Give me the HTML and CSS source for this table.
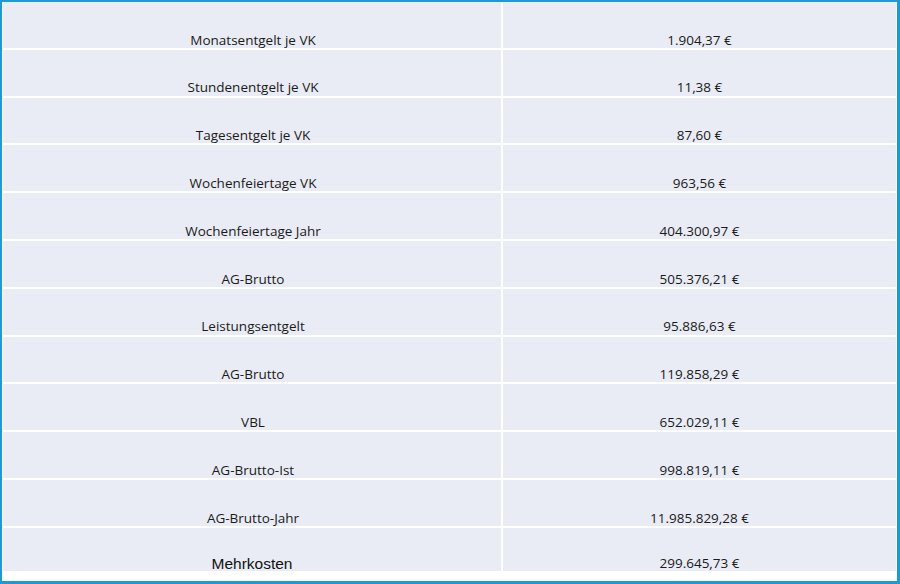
FILE: index.html
```html
<!DOCTYPE html>
<html lang="de">
<head>
<meta charset="utf-8">
<title>Kosten</title>
<link rel="stylesheet" href="styles.css">
</head>
<body>
<div class="frame">
  <div class="table">
    <div class="cell label">Monatsentgelt je VK</div><div class="cell value">1.904,37 €</div>
    <div class="cell label">Stundenentgelt je VK</div><div class="cell value">11,38 €</div>
    <div class="cell label">Tagesentgelt je VK</div><div class="cell value">87,60 €</div>
    <div class="cell label">Wochenfeiertage VK</div><div class="cell value">963,56 €</div>
    <div class="cell label">Wochenfeiertage Jahr</div><div class="cell value">404.300,97 €</div>
    <div class="cell label">AG-Brutto</div><div class="cell value">505.376,21 €</div>
    <div class="cell label">Leistungsentgelt</div><div class="cell value">95.886,63 €</div>
    <div class="cell label">AG-Brutto</div><div class="cell value">119.858,29 €</div>
    <div class="cell label">VBL</div><div class="cell value">652.029,11 €</div>
    <div class="cell label">AG-Brutto-Ist</div><div class="cell value">998.819,11 €</div>
    <div class="cell label">AG-Brutto-Jahr</div><div class="cell value">11.985.829,28 €</div>
    <div class="cell total">Mehrkosten</div><div class="cell value">299.645,73 €</div>
  </div>
</div>
</body>
</html>
```
FILE: styles.css
```css
html, body {
  margin: 0;
  padding: 0;
  background: #ffffff;
}
.frame {
  box-sizing: border-box;
  width: 900px;
  height: 584px;
  border-style: solid;
  border-color: #1b9ad5;
  border-width: 2px 3px 3px 2px;
  background: #ffffff;
  padding: 0 1px 0 1px;
}
.table {
  display: grid;
  grid-template-columns: 498px 1fr;
  grid-template-rows: repeat(11, 45.8px) 43.5px;
  column-gap: 2px;
  row-gap: 2px;
}
.cell {
  background: #e9ecf4;
  display: flex;
  align-items: flex-end;
  justify-content: center;
  font-family: "Open Sans", "Liberation Sans", sans-serif;
  font-size: 13.5px;
  line-height: 1.2;
  color: #1a1a1a;
  box-sizing: border-box;
}
.label {
  padding-left: 2px;
}
.total {
  font-family: "Liberation Sans", Arial, sans-serif;
  font-size: 15.5px;
  line-height: 1;
  color: #111;
}
```
